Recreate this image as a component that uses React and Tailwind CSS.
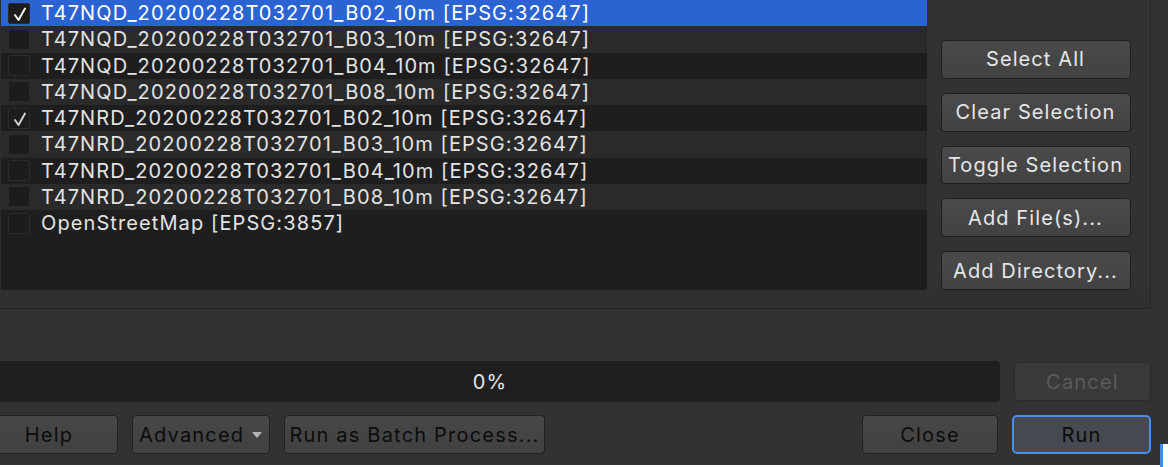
import React from "react";

const rows = [
  { name: "T47NQD_20200228T032701_B02_10m [EPSG:32647]", checked: true, selected: true },
  { name: "T47NQD_20200228T032701_B03_10m [EPSG:32647]" },
  { name: "T47NQD_20200228T032701_B04_10m [EPSG:32647]" },
  { name: "T47NQD_20200228T032701_B08_10m [EPSG:32647]" },
  { name: "T47NRD_20200228T032701_B02_10m [EPSG:32647]", checked: true },
  { name: "T47NRD_20200228T032701_B03_10m [EPSG:32647]" },
  { name: "T47NRD_20200228T032701_B04_10m [EPSG:32647]" },
  { name: "T47NRD_20200228T032701_B08_10m [EPSG:32647]" },
  { name: "OpenStreetMap [EPSG:3857]" },
];

function Check({ selected }) {
  return (
    <svg width="22" height="21" viewBox="0 0 22 21" className="block">
      <polyline
        points="6,11 9.5,16 16,4.5"
        fill="none"
        stroke={selected ? "#f2f2f2" : "#cfcfcf"}
        strokeWidth="2"
        strokeLinecap="round"
        strokeLinejoin="round"
      />
    </svg>
  );
}

function Row({ name, checked, selected, alt }) {
  const bg = selected ? "bg-[#2c63d3]" : alt ? "bg-[#2a2a2a]" : "bg-[#1e1e1e]";
  return (
    <div className={`flex items-center h-[26.25px] ${bg}`}>
      <div className="ml-[7px] w-[22px] h-[21px] rounded-[2px] border border-[#2b2b2b] bg-[#1c1c1c]">
        {checked && <Check selected={selected} />}
      </div>
      <span className={`ml-[11px] whitespace-nowrap text-[20px] tracking-[1.1px] leading-none ${selected ? "text-white" : "text-[#e3e3e3]"}`}>
        {name}
      </span>
    </div>
  );
}

function SideButton({ children }) {
  return (
    <button className="h-[39px] w-[190px] rounded-[4px] border border-[#1f1f1f] bg-gradient-to-b from-[#4a4a4a] to-[#424242] text-[20px] tracking-[1.1px] text-[#e6e6e6]">
      {children}
    </button>
  );
}

function DarkButton({ children, className = "" }) {
  return (
    <button className={`h-[39px] rounded-[4px] border border-[#222] bg-gradient-to-b from-[#474747] to-[#414141] text-[20px] tracking-[1.2px] text-[#0c0c0c] ${className}`}>
      {children}
    </button>
  );
}

export default function App() {
  return (
    <div className="relative w-[1168px] h-[467px] overflow-hidden bg-white font-[Inter,sans-serif]">
      <div className="h-[465px] bg-[#323232] flex flex-col">
        {/* group box */}
        <div className="flex h-[309px] w-[1151px] border-r border-b border-[#262626] bg-[#303030]">
          <div className="w-[927px] h-[290px] bg-[#1e1e1e] border-l border-[#2c2c2c]">
            {rows.map((r, i) => (
              <Row key={i} {...r} alt={i % 2 === 1} />
            ))}
          </div>
          <div className="flex-1 h-[290px] bg-[#323232] flex flex-col items-center pt-[40px] gap-[14px] pr-[6px]">
            <SideButton>Select All</SideButton>
            <SideButton>Clear Selection</SideButton>
            <SideButton>Toggle Selection</SideButton>
            <SideButton>Add File(s)...</SideButton>
            <SideButton>Add Directory...</SideButton>
          </div>
        </div>

        {/* progress */}
        <div className="mt-[52px] flex items-center h-[41px] w-[1151px]">
          <div className="w-[1000px] h-[41px] rounded-r-[4px] bg-[#1f1f1f] flex items-center justify-center pr-[20px]">
            <span className="text-[20px] tracking-[1px] text-[#e6e6e6]">0%</span>
          </div>
          <button className="ml-auto h-[39px] w-[137px] rounded-[4px] border border-[#2a2a2a] bg-[#3a3a3a] text-[20px] tracking-[1.2px] text-[#5b5b5b]">
            Cancel
          </button>
        </div>

        {/* bottom buttons */}
        <div className="mt-[13px] flex items-center w-[1151px]">
          <DarkButton className="w-[138px] -ml-[20px]">Help</DarkButton>
          <DarkButton className="ml-[14px] w-[138px] flex items-center pl-[6px]">
            <span>Advanced</span>
            <svg width="10" height="6" viewBox="0 0 10 6" className="ml-[8px]">
              <polygon points="0,0 10,0 5,6" fill="#b5b5b5" />
            </svg>
          </DarkButton>
          <DarkButton className="ml-[14px] w-[261px]">Run as Batch Process...</DarkButton>
          <DarkButton className="ml-auto w-[136px]">Close</DarkButton>
          <button className="ml-[14px] h-[39px] w-[139px] rounded-[5px] border-2 border-[#4a8fe6] bg-[#464a51] text-[20px] tracking-[1.2px] text-[#0c0c0c]">
            Run
          </button>
        </div>
      </div>

      {/* edge of a window behind */}
      <div className="absolute left-[1160px] top-[444px] w-[3px] h-[23px] bg-[#3d8ef0]" />
      <div className="absolute left-[1163px] top-[444px] w-[5px] h-[23px] bg-white" />
    </div>
  );
}
